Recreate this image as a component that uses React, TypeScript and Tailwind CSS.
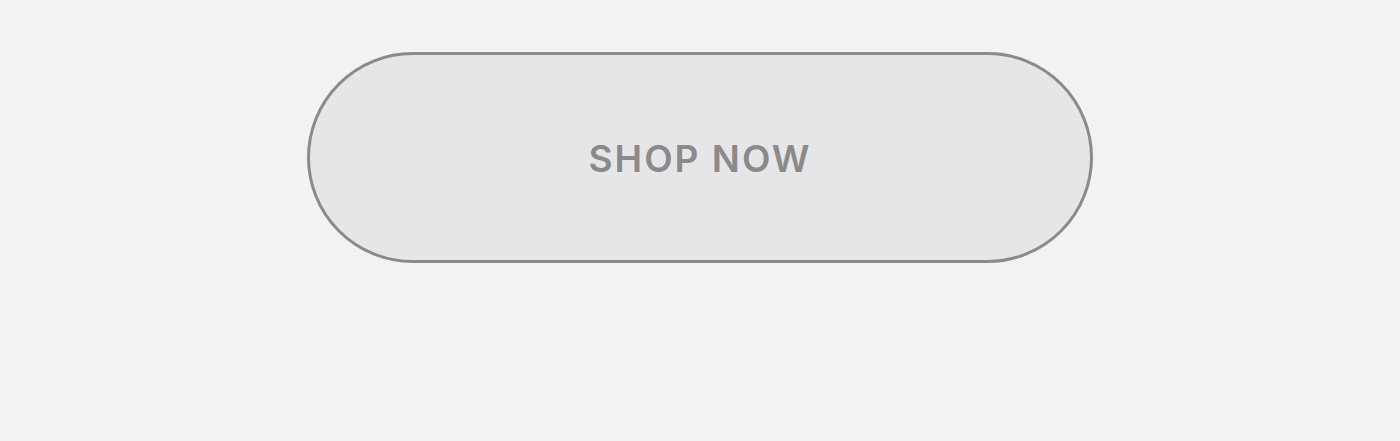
import React from "react";

export default function App() {
  return (
    <div className="min-h-[441px] w-full bg-[#f2f2f4] flex justify-center pt-[52px]">
      <button
        type="button"
        className="w-[786px] h-[211px] rounded-full border-[3px] border-[#8a8a8a] bg-[#e6e6e8] flex items-center justify-center pt-[2px] text-[#8a8a8a] text-[37px] font-semibold tracking-[2px] uppercase"
        style={{ fontFamily: 'Inter, "Liberation Sans", Arial, sans-serif' }}
      >
        Shop Now
      </button>
    </div>
  );
}
